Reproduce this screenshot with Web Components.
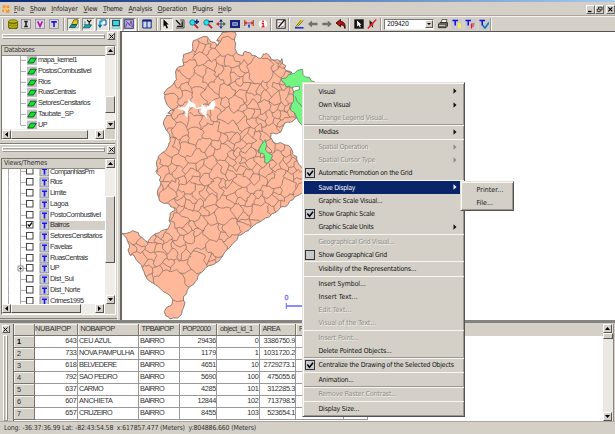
<!DOCTYPE html>
<html lang="en">
<head>
<meta charset="utf-8">
<title>TerraView</title>
<style>
html,body{margin:0;padding:0;width:615px;height:434px;overflow:hidden;background:#d4d0c8}
</style>
</head>
<body>
<gis-app></gis-app>
<script>
const define=(name,html,setup)=>customElements.define(name,class extends HTMLElement{
  constructor(){super();this.attachShadow({mode:'open'});}
  connectedCallback(){
    if(this.done)return;this.done=true;
    this.shadowRoot.innerHTML=typeof html==='function'?html(this):html;
    if(setup)setup(this);
  }
});
const UI='"DejaVu Sans Condensed","DejaVu Sans",sans-serif';

/* Text run spaced out to a given width */
define('fit-text','<style>:host{display:inline-block;white-space:pre;line-height:1.200;flex:none}</style><slot></slot>',el=>{
  const w=parseFloat(el.getAttribute('w'));
  if(!w)return;
  const n=el.textContent.length, cur=el.getBoundingClientRect().width;
  if(cur)el.style.letterSpacing=((w-cur)/n).toFixed(3)+'px';
  el.style.width=w+'px';
});

define('menu-bar',()=>{
  const items=[['File',14,10.5],['Show',30,16],['Infolayer',51.3,26.5],['View',83.5,14],['Theme',103,19.5],['Analysis',128.5,23.5],['Operation',157.5,29.5],['Plugins',192.5,20.5],['Help',218,13.5]];
  let x=14,out='';
  for(const [t,l,w] of items){out+=`<fit-text w="${w}" style="margin-left:${l-x}px"><u>${t[0]}</u>${t.slice(1)}</fit-text>`;x=l+w;}
  return `<style>:host{display:flex;align-items:center;height:13px;background:#d4d0c8;border-bottom:1px solid #aaa69e;font:6.900px ${UI};color:#222;box-sizing:border-box;padding-right:0}
  svg{flex:none} u{text-decoration-thickness:.5px;text-underline-offset:.5px;text-decoration-color:#555}
  .w{margin-left:auto;display:flex;gap:0}.w svg{margin-left:0}.w span{width:9px;height:9px;box-sizing:border-box;border:1px solid;border-color:#fff #666 #666 #fff;display:block}.w span:last-child{margin-left:2px}</style>
  <svg width="14" height="12" viewBox="0 0 14 12"><g fill="#f69228"><circle cx="4.2" cy="3.7" r="1.6"/><circle cx="8" cy="3.8" r="1.5"/><circle cx="3.6" cy="7.5" r="1.6"/><circle cx="7.7" cy="8" r="2"/><circle cx="5.8" cy="6" r="1.9" fill="#f8b45c"/></g><path d="M6 5l2 2M4 6l1 3" stroke="#ffe7a0" stroke-width=".8"/></svg>
  ${out}
  <div class="w"><span><svg width="7" height="7"><path d="M1 5.5h3.5" stroke="#000" stroke-width="1.3"/></svg></span><span><svg width="7" height="7" fill="none" stroke="#111" stroke-width=".8"><path d="M2.5 3V1.2H6V4H4.5"/><path d="M1.2 3.2h3v2.4h-3z"/></svg></span><span><svg width="7" height="7"><path d="M1.3 1.3l4 4m0-4l-4 4" stroke="#000" stroke-width="1.1"/></svg></span></div>`;
});

const T=(c,s)=>`<rect x=".5" y=".5" width="9" height="9" fill="#d9d7d8" stroke="#8a8a94" stroke-width=".8"/><path d="${s}" stroke="${c}" stroke-width="1.6" fill="none"/>`;
const ICONS={
 db:'<path d="M.5 2.5v6c0 2.300 9 2.300 9 0v-6" fill="#8a8400" stroke="#3c3a00" stroke-width=".7"/><ellipse cx="5" cy="2.400" rx="4.500" ry="1.700" fill="#c4bb18" stroke="#3c3a00" stroke-width=".6"/><path d="M.7 4.800c1 1.700 7.600 1.700 8.600 0M.7 6.900c1 1.700 7.600 1.700 8.600 0" stroke="#f0e83a" stroke-width=".6" fill="none"/>',
 i:T('#222','M3.200 2.500h3.600M3.200 7.500h3.600M5 2.500v5'),
 v:T('#b010b0','M2.700 2.400L5 7.400 7.300 2.400'),
 t:T('#1414f0','M2.200 2.900h5.600M5 2.900v5'),
 lay:'<path d="M.5 8.500h9V1h-3" fill="none" stroke="#888" stroke-width=".5"/><path d="M3 4.500L5 .8h3.800V4L7.500 5.500H3z" fill="#e0cc20" stroke="#444400" stroke-width=".7"/><path d="M.4 8.600L2.400 5.600H8L6 8.600z" fill="#10a090" stroke="#003c40" stroke-width=".7"/>',
 vy:'<path d="M.4 8.800L2.400 5.800H8.500L6.500 8.800z" fill="#18b0b8" stroke="#003c40" stroke-width=".7"/><path d="M4.200 .8l2 2.600 2-2.600M6.200 3.200v2.400" stroke="#111" stroke-width="1.100" fill="none"/><path d="M2 2v4M1 5l1 1.500L3.300 5" stroke="#28a" fill="none" stroke-width=".8"/>',
 cp:'<path d="M3.500 1H9v5H6.500" fill="#dff" stroke="#084a90" stroke-width="1"/><path d="M5.600 2.500H3v4" stroke="#0aa8c8" stroke-width="1.600" fill="none"/><path d="M.8 5.800h4.400L3 9.200z" fill="#0860b8"/>',
 sc:'<rect x="1" y=".8" width="8" height="6.400" fill="#3a4c66"/><rect x="2.200" y="2" width="5.600" height="4" fill="#30e0e0"/><path d="M.8 9.200l1-1.600h6.400l1 1.600z" fill="#bff" stroke="#289090" stroke-width=".5"/>',
 mp:'<rect x=".7" y=".7" width="8.600" height="8.600" fill="#a8b8f0" stroke="#303070" stroke-width=".9"/><path d="M1.500 8.500L3.500 3l2 3.500L7 2l1.600 6" stroke="#b03050" fill="none" stroke-width=".9"/><path d="M2 2l6 6" stroke="#4050d0" stroke-width=".7"/>',
 tb:'<path d="M.8 1h8.400v8H.8zM5 1v8" fill="#d0d8f0" stroke="#102880" stroke-width="1"/><path d="M.5 1.700h9" stroke="#102880" stroke-width="1.800"/>',
 ar:'<path d="M2.500 .3l5.200 5.200H5.500L7 8.800l-1.500.7L4.200 6.300 2.500 7.800z" fill="#000"/>',
 se:'<path d="M1 1.200l4.500 4.500M7.200 2.200v5.200H2" stroke="#111" stroke-width="1.300" fill="none"/><path d="M5 1h4v8H1" fill="none" stroke="#111" stroke-width=".7"/>',
 zi:'<circle cx="3.500" cy="3.500" r="2.700" fill="#28e0e8" stroke="#087a90" stroke-width=".9"/><path d="M5.400 5.400L9 9.200" stroke="#c02030" stroke-width="1.900"/><path d="M7.800 .6v4.400M5.600 2.800H10" stroke="#081878" stroke-width="1.400"/>',
 zo:'<circle cx="3.500" cy="3.500" r="2.700" fill="#28e0e8" stroke="#087a90" stroke-width=".9"/><path d="M5.400 5.400L9 9.200" stroke="#c02030" stroke-width="1.900"/><path d="M5.600 2.500H10" stroke="#081878" stroke-width="1.400"/>',
 mv:'<path d="M5 0l1.900 2.800H3.100z" fill="#181878"/><path d="M10 5L7.200 6.900V3.100z" fill="#08881a"/><path d="M5 10L3.100 7.200h3.800z" fill="#2030d0"/><path d="M0 5l2.800-1.900v3.800z" fill="#c01830"/><path d="M5 2v6M2 5h6" stroke="#445" stroke-width=".9"/>',
 re:'<rect x="0" y="1" width="10" height="8" fill="#18247c"/><rect x="2.300" y="3.300" width="5.400" height="3.400" fill="#b8c8e8"/><path d="M3 5h4" stroke="#18247c"/>',
 ha:'<path d="M.8 1v6M9.200 1v6" stroke="#b01818" stroke-width="1"/><path d="M1 4h8M3 2.700L1.200 4 3 5.300M7 2.700L8.800 4 7 5.300" stroke="#b01818" fill="none" stroke-width=".8"/><path d="M5 5.500v3" stroke="#2038e0" stroke-width="1.700"/>',
 in:'<circle cx="5" cy="5" r="4.700" fill="#fff" stroke="#e8a8a0" stroke-width=".6"/><path d="M5 1.600v1.500" stroke="#e01010" stroke-width="1.600"/><path d="M3.700 4.300h1.500v3.500M3.500 7.900h3.200" stroke="#e01010" stroke-width="1.200" fill="none"/>',
 ed:'<rect x=".8" y=".8" width="8.400" height="8.400" fill="#fff" stroke="#222" stroke-width="1"/><path d="M2.500 8L8.500 1" stroke="#111" stroke-width="1.200"/><path d="M2 3.500l3 .5M5 8l3-1" stroke="#d06060" stroke-width=".8"/>',
 pe:'<path d="M1 8.800h8.500" stroke="#1830d8" stroke-width="1.600"/><path d="M2.200 7.500L8 .8" stroke="#f0e020" stroke-width="2.200"/><path d="M1.500 8L7 1.200M3.700 7.500L9.300 1.300" stroke="#33300c" stroke-width=".6"/>',
 la:'<path d="M0 5l4-3.600v2.400h5.500v2.400H4v2.400z" fill="#707070"/>',
 ra:'<path d="M9.800 5l-4-3.600v2.400H.3v2.400h5.500v2.400z" fill="#707070"/>',
 un:'<path d="M0 4L4.500.5v2C8 2.500 9.500 5 9 9.500 8.400 7 7 5.700 4.500 5.700v2z" fill="#c01010" stroke="#280808" stroke-width=".9"/>',
 s1:'<rect x=".3" y=".3" width="9.400" height="9.400" fill="#161616"/><path d="M3 1.500l4.500 4.300H5.700L6.800 8l-1 .5-1-2.300L3.200 7.500z" fill="#fff"/>',
 s2:'<path d="M2.500 1l4.500 4.300H5.200L6.300 8l-1 .5-1.100-2.400L2.700 7.500z" fill="#222"/><path d="M.8 9.500L9.200.5" stroke="#f01818" stroke-width="1.400"/>',
 pr:'<path d="M3 4l1-3.500h5L8 4z" fill="#eee" stroke="#333" stroke-width=".7"/><path d="M.5 5l1.500-1.500h7.500V7L8 8.700H.5z" fill="#66665a" stroke="#222" stroke-width=".8"/><path d="M1 6.500h6" stroke="#ddd" stroke-width=".8"/>',
 t1:'<path d="M.5 1.500h5.500M3.200 1.500v5" stroke="#1010e0" stroke-width="1.500" fill="none"/><path d="M6 4h3v5.500H6z" fill="#f0ec60"/>',
 t2:'<path d="M.5 1.500h5.500M3.200 1.500v5" stroke="#1010e0" stroke-width="1.500" fill="none"/><path d="M6.500 9.500V5h3M6.500 7h2.500" stroke="#e81818" stroke-width="1.200" fill="none"/>',
 t3:'<path d="M.5 1.500h5.500M3.200 1.500v5" stroke="#1010e0" stroke-width="1.500" fill="none"/><path d="M3.500 6L6 9l4-5.500" stroke="#1878a8" stroke-width="1.700" fill="none"/>'
};
define('tool-icon',el=>`<style>:host{display:grid;place-items:center;width:13px;height:13px;flex:none;box-sizing:border-box}:host([p]){border:1px solid;border-color:#8b8983 #fff #fff #8b8983;background:#e6e3dd}:host([q]){background:#c9c9cc;background-clip:content-box;padding:1px}</style><svg width="10" height="10" viewBox="0 0 10 10">${ICONS[el.getAttribute('n')]}</svg>`);

define('tool-bar',()=>{
  const L=[['db',12.5],['i',26],['v',40],['t',54],['|',64],['lay',73.5,'p'],['vy',88,'p'],['cp',102,'p'],['sc',115.500,'p'],['mp',129,'p'],['|',138],['tb',147],['|',157],['ar',166,'p'],['se',179.500],['zi',193.500],['zo',207.500],['mv',221],['re',235],['ha',248.500],['in',262.500],['|',271],['ed',281],['|',289],['pe',299],['la',313],['ra',326.500],['un',340.500],['|',349],['s1',358.500],['s2',372],['|',381],['combo',409],['pr',443],['t1',456.500,'q'],['t2',470,'q'],['t3',484,'q'],['|',491]];
  let x=4,o='';
  for(const [n,c,p] of L){
    const w=n=='|'?2:n=='combo'?50:13,m=c-w/2-x;x=c+w/2;
    o+=n=='|'?`<i style="margin-left:${m}px"></i>`:n=='combo'?`<div class="c" style="margin-left:${m}px"><fit-text w="21.5">209420</fit-text><b></b></div>`:`<tool-icon n="${n}" ${p||''} style="margin-left:${m}px"></tool-icon>`;
  }
  return `<style>:host{display:flex;align-items:center;height:15px;box-sizing:border-box;background:#d4d0c8;border-top:1px solid #f4f2ee;padding-left:2px}
  .g{width:1px;height:11px;border-left:1px solid #fff;background:#999;flex:none}
  i{width:1px;border-left:1px solid #9c9992;background:#f6f4f0;height:13px;flex:none}
  .c{width:50px;height:11px;box-sizing:border-box;background:#fff;border:1px solid;border-color:#777 #eee #eee #777;display:flex;align-items:center;justify-content:space-between;padding-left:2px;font:7px ${UI};color:#222}
  b{width:8px;height:8px;box-sizing:border-box;background:#d4d0c8;border:1px solid;border-color:#fff #555 #555 #fff;display:grid}
  b::after{content:"";place-self:center;border:2px solid transparent;border-top-color:#000;border-bottom:0}</style><span class="g"></span>${o}`;
});

define('scroll-button',el=>{
  const d={u:'M0 3L2.500 0 5 3z',d:'M0 0h5L2.500 3z',l:'M3 0v5L0 2.500z',r:'M0 0v5l3-2.500z'}[el.getAttribute('d')];
  const h='lr'.includes(el.getAttribute('d'));
  return `<style>:host{display:grid;place-items:center;width:9px;height:9px;box-sizing:border-box;background:#d4d0c8;border:1px solid;border-color:#fff #55534f #55534f #fff;flex:none}</style><svg width="${h?3:5}" height="${h?5:3}"><path d="${d}"/></svg>`;
});

define('close-grip',`<style>:host{display:flex;align-items:center;height:10px;padding:0 2px 0 2px;gap:2px}
 div{flex:1;height:5px;box-sizing:border-box;border:1px solid;border-color:#fff #8b8983 #9a9892 #fff;background:#d4d0c8;box-shadow:inset 0 -1px #fff,inset 0 1px #a9a6a0}
 span{width:8px;height:8px;box-sizing:border-box;border:1px solid;border-color:#fff #555 #555 #fff;display:grid;place-items:center}</style><div></div><span><svg width="5" height="5"><path d="M.5.5l4 4m0-4l-4 4" stroke="#000"/></svg></span>`);

/* Framed tree with a column header and both scrollbars */
define('tree-box',el=>`<style>
 :host{display:grid;grid-template:1fr 10px/1fr 10px;box-sizing:border-box;border:1px solid;border-color:#77756f #fff #fff #77756f;background:#fff;font:7.300px "Liberation Sans",sans-serif;color:#333}
 .l{min-width:0;min-height:0;overflow:hidden;display:flex;flex-direction:column}
 .h{height:10px;flex:none;box-sizing:border-box;background:#d4d0c8;border-bottom:1px solid #8d8b85;display:flex;align-items:center;padding-left:2px;font:7px ${UI}}
 .r{flex:1;min-height:0;overflow:hidden}
 .v,.z{background:#efede8;display:flex;flex-direction:column}.z{flex-direction:row}
 .t{background:#d4d0c8;border:1px solid;border-color:#fff #55534f #55534f #fff;box-sizing:border-box;flex:none}
 .v .t{width:10px}.v{align-items:center}.z{align-items:center;margin-right:1px}
 .e{margin-top:auto}.x{margin-left:auto}.k{background:#d4d0c8}
 </style><div class="l"><div class="h"><fit-text w="${el.getAttribute('tw')}">${el.getAttribute('title-text')}</fit-text></div><div class="r"><slot></slot></div></div>
 <div class="v"><scroll-button d="u"></scroll-button><div class="t" style="margin-top:${el.getAttribute('vo')}px;height:${el.getAttribute('vh')}px"></div><scroll-button class="e" d="d"></scroll-button></div>
 <div class="z"><scroll-button d="l"></scroll-button><div class="t" style="height:9px;width:${el.getAttribute('hw')}px"></div><scroll-button class="x" d="r"></scroll-button></div><div class="k"></div>`);

define('tree-row',el=>{
  const db=el.hasAttribute('db'),c=el.hasAttribute('checked'),plus=el.hasAttribute('plus');
  const g=db?`<svg width="35" height="10.800" viewBox="0 0 35 10.800"><path d="M18.500 0v${el.hasAttribute('last')?5.400:10.800}M19 5.400h5" stroke="#aaa" stroke-width="1"/><rect x="25" y=".6" width="10" height="9.600" fill="#c3c1c0"/><path d="M25.800 8L28.700 3.200H34.300L31.400 8z" fill="#10e818" stroke="#053" stroke-width=".9"/></svg>`
  :`<svg width="47" height="10.800" viewBox="0 0 47 10.800"><path d="M6.500 0v10.800M18.500 0v10.800M19 5.400h5" stroke="#aaa"/>${plus?'<path d="M16 3h5v5h-5z" fill="#fff" stroke="#777" stroke-width=".8"/><path d="M17 5.500h3M18.500 4v3" stroke="#333" stroke-width=".8"/>':''}<rect x="24.500" y="1.500" width="6.500" height="6.500" fill="#fff" stroke="#444" stroke-width="1"/>${c?'<path d="M25.800 4.300l1.500 1.900 2.700-3.600" fill="none" stroke="#000" stroke-width="1.300"/>':''}<rect x="38" y=".900" width="8.800" height="9" fill="#cdccd2" stroke="#87868c" stroke-width=".9"/><path d="M40 3.200h5M42.500 3.200v5.200" stroke="#1515f0" stroke-width="1.600"/></svg>`;
  return `<style>:host{display:flex;height:10.780px;align-items:center}svg{flex:none}fit-text{margin-left:1px}span{display:flex;align-items:center;height:9.500px;flex:1;${c?'background:#d4d0c8':''}}</style>${g}<span><fit-text w="${el.getAttribute('w')}">${el.textContent}</fit-text></span>`;
});

define('side-dock',()=>{
  const A=[['mapa_kernel1',39],['PostosCombustivel',53],['Rios',12.300],['RuasCentrais',37.500],['SetoresCensitarios',52],['Taubate_SP',35.500],['UP',9]];
  const B=[['CompanhiasPm',44],['Rios',12],['Limite',16],['Lagoa',18],['PostoCombustivel',50.500],['Bairros',19],['SetoresCensitarios',52],['Favelas',22],['RuasCentrais',37.500],['UP',9],['Dist_Sul',23.500],['Dist_Norte',30],['Crimes1995',33.500]];
  return `<style>:host{display:flex;flex-direction:column;width:118px;background:#d4d0c8;box-sizing:border-box;border-right:1px solid #f5f3ef}
  .a{margin:4px 1px 0 1px;height:95px}.b{margin:3px 1px 0 1px;height:157px}.s{height:2px;background:#807e7a;margin:2.500px 2px 0 0;border-bottom:1px solid #fff;box-sizing:border-box}.f{height:1px;background:#807e7a;margin-top:3px}
  .in{margin-top:-1px}.jn{margin-top:-2px}</style>
  <close-grip></close-grip>
  <tree-box class="a" title-text="Databases" tw="30.500" vo="41" vh="17" hw="77"><div class="in">${A.map(([t,w],i)=>`<tree-row db ${i==6?'last':''} w="${w}">${t}</tree-row>`).join('')}</div></tree-box>
  <div class="s"></div><close-grip></close-grip>
  <tree-box class="b" title-text="Views/Themes" tw="43" vo="28" vh="67" hw="70"><div class="jn">${B.map(([t,w],i)=>`<tree-row w="${w}" ${i==5?'checked':''} ${i==9?'plus':''}>${t}</tree-row>`).join('')}</div></tree-box><div class="f"></div>`;
});

/* City map: districts are a warped, partly merged Voronoi partition clipped by the city limit. Units are a third of a pixel. */
const CITY=[305,18,312,13,345,12,348,22,344,33,347,45,345,62,352,78,370,82,375,70,388,74,395,82,408,84,415,90,425,88,430,78,440,76,449,84,456,95,472,95,480,103,486,92,488,108,497,113,492,120,500,128,516,134,506,142,524,200,522,250,530,270,518,280,503,282,494,285,488,298,482,312,470,318,452,316,452,328,460,342,472,347,485,345,492,350,505,352,514,362,518,378,530,385,534,405,543,415,560,440,560,480,545,496,530,504,518,516,508,521,500,534,485,536,470,551,455,558,445,568,428,576,410,586,395,598,385,608,370,616,355,622,345,641,330,658,315,671,308,684,298,698,280,710,258,718,238,738,232,754,222,768,207,778,200,794,190,806,195,824,190,841,185,858,172,870,150,873,138,864,133,851,140,838,155,831,158,814,148,801,130,791,115,776,100,766,82,754,72,731,65,711,48,694,42,682,30,682,24,666,28,651,20,631,5,616,20,616,38,608,55,614,62,626,75,638,84,644,90,631,105,618,125,608,145,602,152,586,148,574,150,556,165,548,158,538,150,530,130,526,118,518,112,498,116,481,122,471,118,456,122,446,110,436,107,430,112,420,110,400,115,385,130,372,140,362,147,345,150,335,148,318,138,305,130,288,135,272,140,262,155,262,143,255,150,248,163,246,150,240,140,228,134,210,132,196,142,182,162,165,170,155,168,140,170,122,180,115,192,112,188,95,190,80,215,72,218,55,220,38,240,30,262,26,268,35,275,42,288,46,290,54,298,45,290,38];
const pairs=a=>{const p=[];for(let i=0;i<a.length;i+=2)p.push([a[i],a[i+1]]);return p;};
function cityMap(){
  let s=4177;const rnd=()=>(s=(s*16807)%2147483647)/2147483647;
  const poly=pairs(CITY);
  const inside=(x,y)=>{let c=false;for(let i=0,j=poly.length-1;i<poly.length;j=i++){const[a,b]=poly[i],[d,e]=poly[j];if((b>y)!=(e>y)&&x<(d-a)*(y-b)/(e-b)+a)c=!c;}return c;};
  const P=[[420,125,48],[318,55,34],[242,58,14],[262,60,13],[200,365,26],[180,400,22],[275,310,30],[505,478,30],[150,775,62],[160,850,40],[230,700,34],[335,600,30],[275,610,30],[420,555,34],[232,160,24],[222,278,24],[145,500,26],[180,580,26],[40,628,20],[290,660,32],[270,145,22],[320,190,24],[250,350,24],[180,640,15],[440,490,20]];
  const fixed=P.length;
  for(let k=0;k<14000&&P.length<480;k++){
    const x=rnd()*560,y=10+rnd()*860;
    if(!inside(x,y)||y>755)continue;
    const r=(y<330?(x>370?14.500:19.500):x>300&&y<470?13.500:y<560?15.500:16)*(.65+rnd()*.75);
    if(P.every(p=>Math.hypot(p[0]-x,p[1]-y)>(r+p[2])*.72))P.push([x,y,r]);
  }
  /* merge some seeds with their nearest neighbour into elongated districts */
  const group=P.map((_,i)=>i);
  P.forEach((p,i)=>{
    if(i<fixed||rnd()>.24)return;
    let best=-1,bd=1e9;
    P.forEach((q,j)=>{if(j!=i&&j>=fixed){const d=Math.hypot((p[0]-q[0])*(1+(i%3)),(p[1]-q[1])*(1+((i+1)%3)));if(d<bd&&Math.hypot(p[0]-q[0],p[1]-q[1])<34){bd=d;best=j;}}});
    if(best>=0)group[i]=group[best];
  });
  const W=(x,y)=>(x+4.500*Math.sin(y*.15+x*.05)+1.800*Math.sin(y*.4-x*.11)).toFixed(1)+' '+(y+4.500*Math.sin(x*.16-y*.04)+1.800*Math.sin(x*.42+y*.13)).toFixed(1);
  let d='';
  P.forEach((p,i)=>{
    let cell=[[-50,-50,-1],[700,-50,-1],[700,950,-1],[-50,950,-1]];
    P.forEach((q,j)=>{
      if(i==j)return;
      const nx=q[0]-p[0],ny=q[1]-p[1],w=(p[2]*p[2]-q[2]*q[2])*.6,c=(q[0]*q[0]+q[1]*q[1]-p[0]*p[0]-p[1]*p[1]+w)/2;
      const out=[];
      for(let k=0;k<cell.length;k++){
        const a=cell[k],b=cell[(k+1)%cell.length],da=a[0]*nx+a[1]*ny-c,db=b[0]*nx+b[1]*ny-c;
        if(da<=0)out.push(a);
        if(da<=0!=db<=0){const t=da/(da-db);out.push([a[0]+t*(b[0]-a[0]),a[1]+t*(b[1]-a[1]),da<=0?j:a[2]]);}
      }
      cell=out;
    });
    cell.forEach((a,k)=>{
      if(a[2]<=i||group[a[2]]==group[i])return;
      const b=cell[(k+1)%cell.length],l=Math.hypot(b[0]-a[0],b[1]-a[1]),n=Math.max(1,Math.min(10,Math.round(l/8)));
      d+='M'+W(a[0],a[1]);
      for(let m=1;m<n;m++){const t=m/n,o=Math.min(l*.2,4);d+='L'+W(a[0]+t*(b[0]-a[0])+(rnd()-.5)*o,a[1]+t*(b[1]-a[1])+(rnd()-.5)*o);}
      d+='L'+W(b[0],b[1]);
    });
  });
  return d;
}
const rough=(a)=>{let s=9;const r=()=>((s=(s*16807)%2147483647)/2147483647-.5);const p=pairs(a);return 'M'+p.map((q,i)=>{const n=p[(i+1)%p.length];return `${q[0]} ${q[1]}L${((q[0]+n[0])/2+r()*5).toFixed(1)} ${((q[1]+n[1])/2+r()*5).toFixed(1)}`}).join('L')+'Z';};
define('map-canvas',()=>{
  const o=rough(CITY);
  return `<style>:host{display:block;background:#fff;border-top:1px solid #55534f;border-left:2px solid #6b6965;overflow:hidden;box-sizing:border-box}svg{display:block}</style>
  <svg width="492" height="288" viewBox="6 12 1476 864"><defs><clipPath id="c"><path d="${o}"/></clipPath></defs>
  <path d="${o}" fill="#ffb899"/><g clip-path="url(#c)"><path d="${cityMap()}" fill="none" stroke="#806f67" stroke-width="2.100"/></g><path d="${o}" fill="none" stroke="#7d6f68" stroke-width="2.600"/>
  <path d="M173 242L182 238 195 238 203 228 206 214 214 222 225 228 228 240 243 236 246 228 255 238 268 234 276 220 284 218 286 232 280 245 262 244 258 256 262 272 252 260 242 252 244 240 232 244 220 238 208 236 204 250 202 268 196 264 196 250 188 246z" fill="#fff" stroke="#fff" stroke-width="1"/>
  <g fill="#73f581" stroke="#6a7a68" stroke-width="2.300"><path d="M484 152L498 150 506 140 524 136 532 127 548 124 549 140 556 147 568 148 573 158 585 162 585 290 545 290 537 282 530 268 524 255 511 246 514 230 521 220 520 195 526 188 538 185 538 175 524 176 514 180 508 174 497 176 494 165 486 160z"/><path d="M526 205L532 222 540 228 548 238" fill="none"/><path d="M436 335L440 352 436 366 446 375 458 383 452 396 442 406 434 404 434 384 430 377 416 374 418 362 424 350z"/></g>
  <g stroke="#7474ff" fill="none"><path d="M499 825v18" stroke-width="3.500"/><path d="M499 834h60" stroke-width="5"/></g><text x="499" y="816" text-anchor="middle" font-family="Liberation Sans" font-size="21" stroke="#6a6af6" stroke-width=".8" fill="#6a6af6">0</text></svg>`;
});

define('data-grid',()=>{
  const H=[['NUBAIPOP',36],['NOBAIPOP',34],['TPBAIPOP',32],['POP2000',28],['object_id_1',32.500],['AREA',17.500],['P',4.500],['',0]];
  const R=[['643','CEU AZUL',33,'29436','0','3386750.9'],['733','NOVA PAMPULHA',56,'1179','1','1031720.2'],['618','BELVEDERE',38.500,'4651','10','2729273.1'],['792','SAO PEDRO',39,'5690','100','475055.6'],['637','CARMO',25,'4285','101','312285.3'],['607','ANCHIETA',34.500,'12844','102','713798.5'],['657','CRUZEIRO',34,'8455','103','523654.1']];
  const num=t=>`<fit-text w="${(t.replace('.','').length*3.720+(t.includes('.')?1.700:0)).toFixed(1)}">${t}</fit-text>`;
  let o='<b></b>'+H.map(([t,w],i)=>`<b class="${i==0?'rt':''}">${t?`<fit-text w="${w}">${t}</fit-text>`:''}</b>`).join('')+'<em></em>';
  R.forEach((r,i)=>{o+=`<b style="${i?'':'font-weight:bold;color:#000'}">${i+1}</b><s class="n">${num(r[0])}</s><s><fit-text w="${r[2]-1}">${r[1]}</fit-text></s><s><fit-text w="24">BAIRRO</fit-text></s><s class="n">${num(r[3])}</s><s class="n">${num(r[4])}</s><s class="n">${num(r[5])}</s><s></s><s></s><u></u>`;});
  return `<style>:host{display:grid;grid-template:repeat(8,12.030px)/21px 42.500px 61px 41px 37.500px 42.500px 36.500px 48px 24px 1fr;background:#fff;font:7.300px "Liberation Sans",sans-serif;color:#333;border-left:1px solid #666;overflow:hidden;box-sizing:border-box}
  b,s{font-weight:normal;text-decoration:none;box-sizing:border-box;display:flex;align-items:center;border-right:1px solid #999;border-bottom:1px solid #999;overflow:hidden;padding-left:1.500px;min-width:0}
  b{background:#d4d0c8;border-color:#77756f;box-shadow:inset 1px 1px #f3f1ed;padding-left:3px}b.rt{justify-content:flex-end;padding-right:5.500px}
  s.n{justify-content:flex-end;padding:0}em{background:#d4d0c8}</style>${o}`;
});

define('bottom-dock',`<style>:host{display:flex;height:101px;background:#d4d0c8;border-top:3px solid #85837f;box-sizing:border-box;padding-top:1px;overflow:hidden}
 .g{width:13px;display:flex;flex-direction:column;align-items:center;gap:2px;padding:1px 2px 0 0;box-sizing:border-box}
 .g span{width:8px;height:8px;box-sizing:border-box;border:1px solid;border-color:#fff #555 #555 #fff;display:grid;place-items:center}
 .g div{width:5px;flex:1;border:1px solid;border-color:#fff #8b8983 #9a9892 #fff;box-sizing:border-box;box-shadow:inset -1px 0 #fff,inset 1px 0 #a9a6a0}
 data-grid{flex:1;min-width:0}.v{width:10px;background:#eae8e3;display:flex;flex-direction:column;margin-right:1px;border-right:1px solid #888}.v i{height:6px;background:#d4d0c8;border:1px solid;border-color:#fff #555 #555 #fff;box-sizing:border-box}.v scroll-button:last-child{margin-top:auto}</style>
 <div class="g"><span><svg width="5" height="5"><path d="M.5.5l4 4m0-4l-4 4" stroke="#000"/></svg></span><div></div></div><data-grid></data-grid><div class="v"><scroll-button d="u"></scroll-button><i></i><scroll-button d="d"></scroll-button></div>`);

define('status-bar',`<style>:host{display:flex;align-items:center;flex:1;padding:1px 0 0 4px;border-top:1px solid #aaa7a0;font:6.900px ${UI};color:#333;box-sizing:border-box}</style><fit-text w="252">Long: -36:37:36.99 Lat: -82:43:54.58  x:617857.477 (Meters)  y:804886.660 (Meters)</fit-text>`);

define('menu-item',el=>{
  const c=el.getAttribute('check'),h=el.hasAttribute('hot'),d=el.hasAttribute('off');
  const col=h?'#fff':d?'#8e8b86':'#111';
  return `<style>:host{display:flex;align-items:center;height:13.220px;color:${col};${h?'background:#0a246a;':''}${d?'text-shadow:.6px .6px #f4f2ee;':''}padding-right:6px}
  div{width:14.500px;flex:none;height:13px;display:grid;align-items:center}.s{margin-left:auto;flex:none}div svg{margin-left:-.5px}fit-text{padding-top:.8px}</style>
  <div>${c!==null?`<svg width="12" height="12"><rect x="1.500" y="1.500" width="9" height="9" fill="${c?'#c9cad0':'#c9c9c9'}" stroke="#33333a" stroke-width="1"/>${c?'<path d="M3.300 5.500l2.200 2.700L9 3.800" fill="none" stroke="#000" stroke-width="1.500"/>':''}</svg>`:''}</div><fit-text w="${el.getAttribute('w')}">${el.textContent}</fit-text>${el.hasAttribute('sub')?`<svg class="s" width="4" height="6"><path d="M.5 .3v5.400L3.500 3z" fill="${col}"/></svg>`:''}`;
});

define('popup-menu',`<style>:host{display:flex;flex-direction:column;background:#d4d0c8;border:1px solid;border-color:#e4e1db #55534f #55534f #e4e1db;box-shadow:inset 1px 1px #fbfaf8,inset -1px -1px #9a9791;box-sizing:border-box;font:6.900px ${UI};padding:1px}::slotted(hr){margin:0 -.5px;border:0;height:1.330px;flex:none;background:linear-gradient(#9b9892 50%,#f8f6f2 50%)}</style><slot></slot>`);

define('gis-app',()=>{
  const M=[['Visual',16.700,'sub'],['Own Visual',31.700,'sub'],['Change Legend Visual...',69.700,'off'],0,['Medias',20,'sub'],0,['Spatial Operation',49.700,'off sub'],['Spatial Cursor Type',56.700,'off sub'],['Automatic Promotion on the Grid',93.700,'check="1"'],0,['Save Display',36.700,'hot sub'],['Graphic Scale Visual...',63.700,''],['Show Graphic Scale',56,'check="1"'],['Graphic Scale Units',55,'sub'],0,['Geographical Grid Visual...',75.700,'off'],['Show Geographical Grid',68.300,'check=""'],0,['Visibility of the Representations...',97.700,''],0,['Insert Symbol...',47,''],['Insert Text...',39.300,''],['Edit Text...',33,'off'],['Visual of the Text...',57.700,'off'],0,['Insert Point...',40.300,'off'],['Delete Pointed Objects...',73,''],0,['Centralize the Drawing of the Selected Objects',135.300,'check="1"'],0,['Animation...',35,''],0,['Remove Raster Contrast...',78.300,'off'],0,['Display Size...',40.700,'']];
  const items=M.map(m=>m?`<menu-item w="${m[1]}" ${m[2]}>${m[0]}</menu-item>`:'<hr>').join('');
  return `<style>:host{display:flex;flex-direction:column;width:615px;height:434px;position:relative;background:#d4d0c8}
  .t{height:2px;background:linear-gradient(90deg,#0a2a78,#a6caf0);border-bottom:1px solid #d4d0c8;flex:none}
  .m{display:flex;height:289px;flex:none}.m map-canvas{flex:1;margin-left:2px}
  menu-bar,tool-bar,bottom-dock{flex:none}
  popup-menu{position:absolute}
  .one{left:302px;top:82px;width:163px;height:335px;padding-top:1.800px}
  .two{left:460px;top:181px;width:54px;height:30px}</style>
  <div class="t"></div><menu-bar></menu-bar><tool-bar></tool-bar>
  <div class="m"><side-dock></side-dock><map-canvas></map-canvas></div>
  <bottom-dock></bottom-dock><status-bar></status-bar>
  <popup-menu class="one">${items}</popup-menu>
  <popup-menu class="two"><menu-item w="27">Printer...</menu-item><menu-item w="16.500">File...</menu-item></popup-menu>`;
});
</script>
</body>
</html>
